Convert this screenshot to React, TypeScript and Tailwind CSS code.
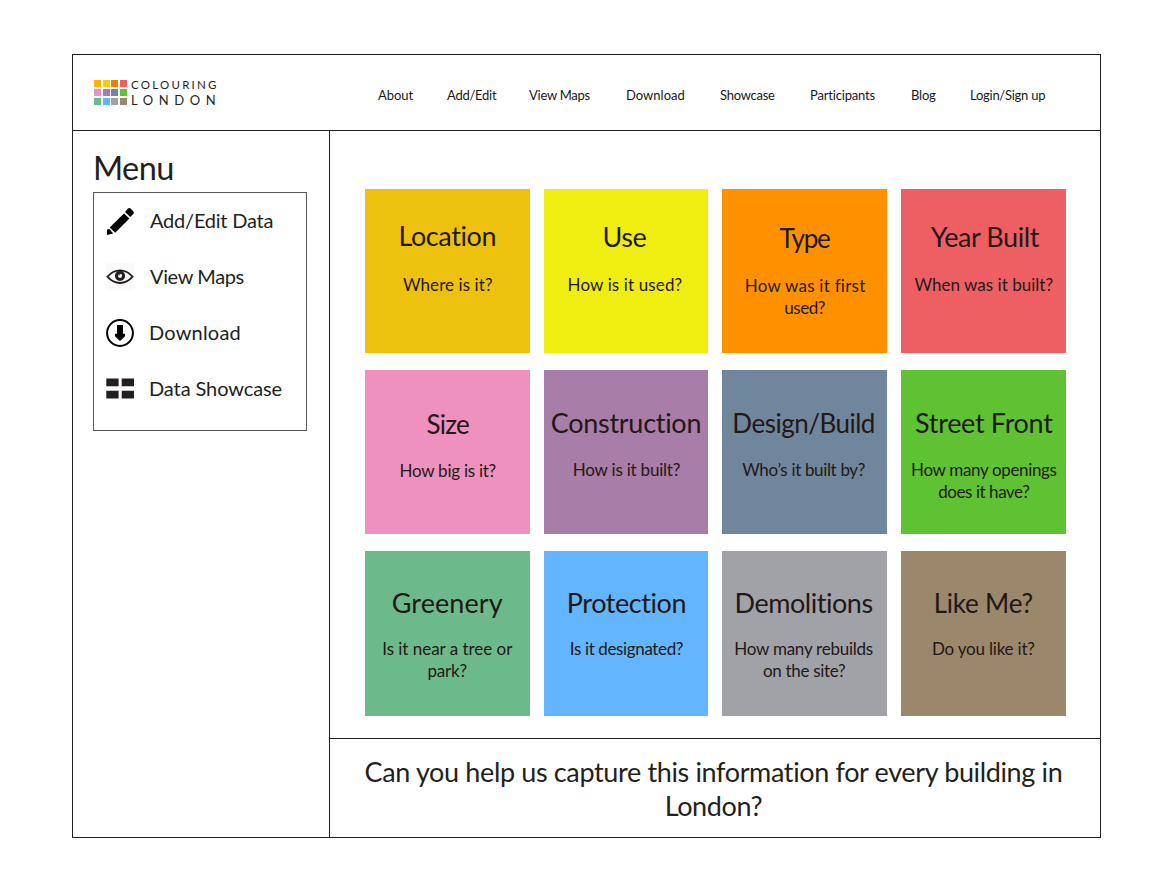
import type { ReactNode } from "react";

type Line = { text: string; tracking: string };
type Card = {
  title: string;
  tracking: string;
  color: string;
  pad: string;
  gap: string;
  lines: Line[];
};

const navItems: Line[] = [
  { text: "About", tracking: "tracking-[-0.04px]" },
  { text: "Add/Edit", tracking: "tracking-[-0.25px]" },
  { text: "View Maps", tracking: "tracking-[-0.26px]" },
  { text: "Download", tracking: "tracking-[0.01px]" },
  { text: "Showcase", tracking: "tracking-[-0.27px]" },
  { text: "Participants", tracking: "tracking-[-0.17px]" },
  { text: "Blog", tracking: "tracking-[-0.23px]" },
  { text: "Login/Sign up", tracking: "tracking-[-0.26px]" },
];

const cards: Card[] = [
  { title: "Location", tracking: "text-[27px] tracking-[-0.4px]", color: "bg-[#edc20f]", pad: "pt-[31px]", gap: "mt-[22px]", lines: [{ text: "Where is it?", tracking: "tracking-[0.08px] pl-px" }] },
  { title: "Use", tracking: "text-[27px] tracking-[-0.45px] pr-[3px]", color: "bg-[#f0ee10]", pad: "pt-[32px]", gap: "mt-[21px]", lines: [{ text: "How is it used?", tracking: "tracking-[0.13px] pr-[2px]" }] },
  { title: "Type", tracking: "text-[26px] tracking-[-1.2px]", color: "bg-[#ff9100]", pad: "pt-[33px]", gap: "mt-[21px]", lines: [{ text: "How was it first", tracking: "tracking-[0.25px] pl-px" }, { text: "used?", tracking: "tracking-[-0.46px]" }] },
  { title: "Year Built", tracking: "text-[27px] tracking-[-0.42px] pl-[3px]", color: "bg-[#ee5f64]", pad: "pt-[32px]", gap: "mt-[21px]", lines: [{ text: "When was it built?", tracking: "tracking-[0.02px] pl-px" }] },
  { title: "Size", tracking: "text-[26px] tracking-[-0.75px] pl-px", color: "bg-[#ef91be]", pad: "pt-[38px]", gap: "mt-[20px]", lines: [{ text: "How big is it?", tracking: "tracking-[-0.26px] pl-px" }] },
  { title: "Construction", tracking: "text-[27px] tracking-[-0.28px]", color: "bg-[#a87da7]", pad: "pt-[37px]", gap: "mt-[20px]", lines: [{ text: "How is it built?", tracking: "tracking-[-0.21px] pl-px" }] },
  { title: "Design/Build", tracking: "text-[26px] tracking-[-0.5px] pr-[2px]", color: "bg-[#70869c]", pad: "pt-[37px]", gap: "mt-[20px]", lines: [{ text: "Who’s it built by?", tracking: "tracking-[-0.34px] pr-[2px]" }] },
  { title: "Street Front", tracking: "text-[27px] tracking-[-0.32px] pl-px", color: "bg-[#5fc232]", pad: "pt-[37px]", gap: "mt-[20px]", lines: [{ text: "How many openings", tracking: "tracking-[-0.35px] pl-px" }, { text: "does it have?", tracking: "tracking-[-0.43px] pl-px" }] },
  { title: "Greenery", tracking: "text-[27px] tracking-[0.08px]", color: "bg-[#6cba8b]", pad: "pt-[36px]", gap: "mt-[19px]", lines: [{ text: "Is it near a tree or", tracking: "tracking-[-0.03px]" }, { text: "park?", tracking: "tracking-[-0.2px]" }] },
  { title: "Protection", tracking: "text-[27px] tracking-[-0.42px] pl-px", color: "bg-[#64b5ff]", pad: "pt-[36px]", gap: "mt-[19px]", lines: [{ text: "Is it designated?", tracking: "tracking-[-0.37px] pl-px" }] },
  { title: "Demolitions", tracking: "text-[27px] tracking-[-0.47px] pr-[2px]", color: "bg-[#a0a2a8]", pad: "pt-[36px]", gap: "mt-[19px]", lines: [{ text: "How many rebuilds", tracking: "tracking-[-0.24px] pr-[2px]" }, { text: "on the site?", tracking: "tracking-[-0.31px] pr-[1px]" }] },
  { title: "Like Me?", tracking: "text-[26px] tracking-[-0.2px]", color: "bg-[#9b876b]", pad: "pt-[36px]", gap: "mt-[19px]", lines: [{ text: "Do you like it?", tracking: "tracking-[-0.19px]" }] },
];

const logoColors = [
  "bg-[#ffb000]", "bg-[#ffcb05]", "bg-[#e78200]", "bg-[#ee5f64]",
  "bg-[#ef91be]", "bg-[#a87da7]", "bg-[#70869c]", "bg-[#5fc232]",
  "bg-[#6cba8b]", "bg-[#64b5ff]", "bg-[#a0a2a8]", "bg-[#9b876b]",
];

function PencilIcon() {
  return (
    <svg viewBox="0 0 28 28" className="size-7" fill="#000">
      <path d="M1 28V22.6L3.4 22L7.2 26.6Z" />
      <path d="M3.7 20.6L18 6.4L23.4 11.4L9.2 25.7Z" />
      <path d="M19 5L22 1.6Q23.3.6 24.6 1.5L27.4 4.4Q28.2 5.8 27.3 7L24.3 10Z" />
    </svg>
  );
}

function EyeIcon() {
  return (
    <svg viewBox="0 0 28 28" className="size-7" fill="none" stroke="#231f20">
      <path d="M0 0H28V27.5H0Z" fill="#fafafa" stroke="none" />
      <path d="M1.4 13.7C5 9.3 9.2 7.3 14 7.3S23 9.3 26.6 13.7C23 17.9 18.8 20 14 20S5 17.9 1.4 13.7Z" strokeWidth="1.8" />
      <circle cx="14" cy="12.8" r="3.6" strokeWidth="3" />
      <path d="M13 12.6V10.8H14.6" strokeWidth="1" />
    </svg>
  );
}

function DownloadIcon() {
  return (
    <svg viewBox="0 0 28 28" className="size-7">
      <circle cx="14" cy="14" r="12.9" fill="none" stroke="#000" strokeWidth="2" />
      <path d="M11 6H17V14.8H19V17.2L14 22L9 17.2V14.8H11Z" fill="#000" />
    </svg>
  );
}

function TilesIcon() {
  return (
    <svg viewBox="0 0 28 28" className="size-7" fill="#231f20">
      <path d="M.3 3.6H12.6V11.2H.3ZM15.7 3.6H28V11.2H15.7ZM.3 15.8H12.6V23.4H.3ZM15.7 15.8H28V23.4H15.7Z" />
    </svg>
  );
}

const menuItems: { text: string; tracking: string; icon: ReactNode }[] = [
  { text: "Add/Edit Data", tracking: "tracking-[-0.22px]", icon: <PencilIcon /> },
  { text: "View Maps", tracking: "tracking-[-0.39px]", icon: <EyeIcon /> },
  { text: "Download", tracking: "tracking-[0.2px] -ml-px", icon: <DownloadIcon /> },
  { text: "Data Showcase", tracking: "tracking-[-0.1px] -ml-px", icon: <TilesIcon /> },
];

export default function App() {
  return (
    <div className="h-[892px] w-[1171px] bg-white pt-[54px] pl-[72px] font-['Lato','Liberation_Sans',sans-serif] text-[#231f20]">
      <div className="flex h-[784px] w-[1029px] flex-col border border-[#231f20]">
        <header className="flex h-[76px] shrink-0 border-b border-[#231f20]">
          <div className="flex w-[305px] pt-[25px] pl-[21px]">
            <div className="grid h-[25px] w-[33px] grid-cols-4 grid-rows-3 gap-x-[1.5px] gap-y-[1.7px]">
              {logoColors.map((c) => (
                <span key={c} className={c} />
              ))}
            </div>
            <div className="ml-[4px] whitespace-nowrap">
              <div className="-mt-[3px] h-[15px] text-[11.5px] leading-4 tracking-[2.25px]">COLOURING</div>
              <div className="text-[13px] leading-4 tracking-[5.6px]">LONDON</div>
            </div>
          </div>
          <nav className="grid grid-cols-[69px_82px_97px_94px_90px_101px_59px_auto] pt-[32px] text-[13px] leading-4 whitespace-nowrap text-[#1a1718]">
            {navItems.map((n) => (
              <a key={n.text} className={n.tracking}>{n.text}</a>
            ))}
          </nav>
        </header>

        <div className="flex min-h-0 flex-1">
          <aside className="w-[257px] shrink-0 border-r border-[#231f20] pl-[20px]">
            <h1 className="mt-[17px] h-10 text-[32.5px] leading-10 tracking-[-0.6px]">Menu</h1>
            <ul className="mt-[4px] h-[239px] w-[214px] border border-[#59595b] pl-[12px]">
              {menuItems.map((m) => (
                <li key={m.text} className="flex h-14 items-center gap-4">
                  {m.icon}
                  <span className={`-mt-0.5 text-[20px] leading-6 whitespace-nowrap ${m.tracking}`}>{m.text}</span>
                </li>
              ))}
            </ul>
          </aside>

          <main className="flex flex-1 flex-col">
            <section className="h-[608px] border-b border-[#231f20] pt-[58px] pl-[35px]">
              <div className="grid grid-cols-[repeat(4,164.5px)] grid-rows-[164px_164px_165px] gap-x-[14.2px] gap-y-[17px]">
                {cards.map((c) => (
                  <article key={c.title} className={`text-center whitespace-nowrap text-[#231815] ${c.color} ${c.pad}`}>
                    <h2 className={`h-8 leading-8 ${c.tracking}`}>{c.title}</h2>
                    <div className={`text-[17px] leading-[21.5px] ${c.gap}`}>
                      {c.lines.map((l) => (
                        <p key={l.text} className={l.tracking}>{l.text}</p>
                      ))}
                    </div>
                  </article>
                ))}
              </div>
            </section>
            <footer className="pt-[16px] pr-[3px] text-center text-[27px] leading-[34px] tracking-[-0.36px] whitespace-nowrap">
              <p>Can you help us capture this information for every building in</p>
              <p>London?</p>
            </footer>
          </main>
        </div>
      </div>
    </div>
  );
}
